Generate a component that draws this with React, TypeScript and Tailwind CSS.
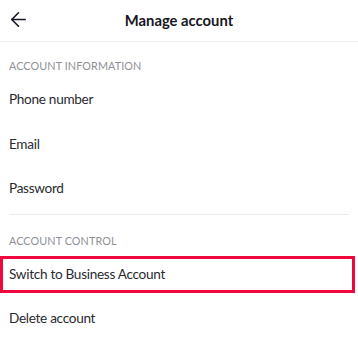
import React from 'react';
import { ArrowLeft } from 'lucide-react';

const Row: React.FC<{ label: string; highlight?: boolean }> = ({ label, highlight }) => (
  <div className="relative h-[44.5px] flex items-center px-[9px] text-[13.6px] tracking-[-0.3px] text-[#2a2a2f]">
    {label}
    {highlight && (
      <div className="absolute left-0 right-[3px] top-[4px] h-[37px] border-[3.5px] border-[#f2073c]" />
    )}
  </div>
);

const SectionLabel: React.FC<{ children: React.ReactNode; className?: string }> = ({ children, className }) => (
  <div className={`px-[9px] text-[10.8px] leading-[14px] tracking-[0.1px] text-[#8f9096] uppercase ${className ?? ''}`}>
    {children}
  </div>
);

const App: React.FC = () => {
  return (
    <div
      className="w-[358px] h-[360px] bg-white overflow-hidden"
      style={{ fontFamily: 'Lato, "Liberation Sans", sans-serif' }}
    >
      <div className="relative h-[42px] flex items-center justify-center border-b border-[#eeeeef]">
        <ArrowLeft className="absolute left-[7px] top-[8px] h-[23px] w-[23px] text-[#161823]" strokeWidth={1.7} />
        <h1 className="text-[14.8px] font-bold text-[#161823]">Manage account</h1>
      </div>

      <SectionLabel className="pt-[17px] pb-[4px]">Account information</SectionLabel>
      <Row label="Phone number" />
      <Row label="Email" />
      <Row label="Password" />
      <div className="mx-[9px] mt-[3px] border-t border-[#ececed]" />

      <SectionLabel className="pt-[19px] pb-[4px]">Account control</SectionLabel>
      <Row label="Switch to Business Account" highlight />
      <Row label="Delete account" />
    </div>
  );
};

export default App;
